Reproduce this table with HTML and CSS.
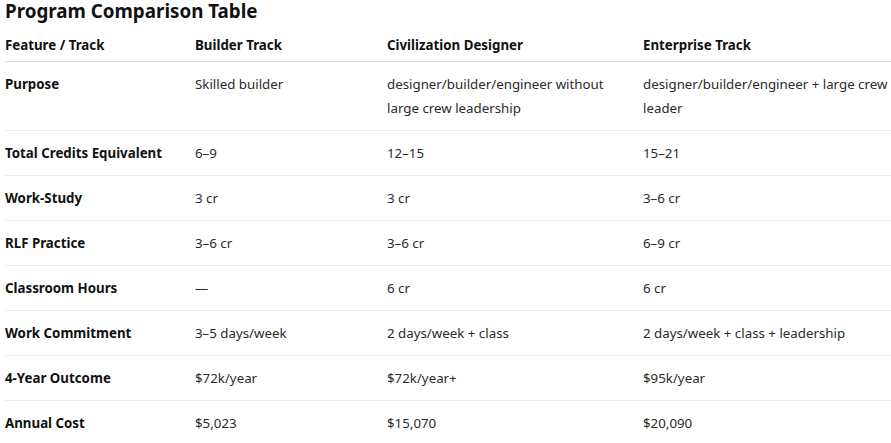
FILE: index.html
```html
<!DOCTYPE html>
<html lang="en">
<head>
<meta charset="utf-8">
<title>Program Comparison Table</title>
<link rel="stylesheet" href="styles.css">
</head>
<body>
<h2 class="title">Program Comparison Table</h2>
<table class="cmp">
  <colgroup>
    <col class="c1"><col class="c2"><col class="c3"><col class="c4">
  </colgroup>
  <thead>
    <tr><th>Feature / Track</th><th>Builder Track</th><th>Civilization Designer</th><th>Enterprise Track</th></tr>
  </thead>
  <tbody>
    <tr><td class="k">Purpose</td><td>Skilled builder</td><td>designer/builder/engineer without large crew leadership</td><td>designer/builder/engineer + large crew leader</td></tr>
    <tr><td class="k">Total Credits Equivalent</td><td>6–9</td><td>12–15</td><td>15–21</td></tr>
    <tr><td class="k">Work-Study</td><td>3 cr</td><td>3 cr</td><td>3–6 cr</td></tr>
    <tr><td class="k">RLF Practice</td><td>3–6 cr</td><td>3–6 cr</td><td>6–9 cr</td></tr>
    <tr><td class="k">Classroom Hours</td><td>—</td><td>6 cr</td><td>6 cr</td></tr>
    <tr><td class="k">Work Commitment</td><td>3–5 days/week</td><td>2 days/week + class</td><td>2 days/week + class + leadership</td></tr>
    <tr><td class="k">4-Year Outcome</td><td>$72k/year</td><td>$72k/year+</td><td>$95k/year</td></tr>
    <tr><td class="k">Annual Cost</td><td>$5,023</td><td>$15,070</td><td>$20,090</td></tr>
  </tbody>
</table>
</body>
</html>
```
FILE: styles.css
```css
html, body {
  margin: 0;
  padding: 0;
  background: #ffffff;
}
body {
  padding: 0 0 0 5px;
  font-family: "Noto Sans", "Open Sans", sans-serif;
  color: #2b2b2b;
  font-size: 13.3px;
}
.title {
  margin: 0;
  font-size: 18.8px;
  line-height: 22px;
  font-weight: 700;
  color: #111;
}
.cmp {
  width: 886px;
  border-collapse: collapse;
  table-layout: fixed;
  margin-top: 11px;
}
.c1 { width: 190px; }
.c2 { width: 192px; }
.c3 { width: 256px; }
.c4 { width: 248px; }
.cmp th {
  text-align: left;
  font-weight: 700;
  color: #111;
  line-height: 24px;
  padding: 0 10px 4px 0;
  border-bottom: 1px solid #d9d9d9;
}
.cmp td {
  line-height: 24px;
  padding: 10px 10px 10px 0;
  vertical-align: top;
  border-bottom: 1px solid #ececec;
}
.cmp th:last-child,
.cmp td:last-child {
  padding-right: 0;
}
.cmp tbody tr:last-child td {
  border-bottom: none;
}
.cmp td.k {
  font-weight: 700;
  color: #111;
}
```
